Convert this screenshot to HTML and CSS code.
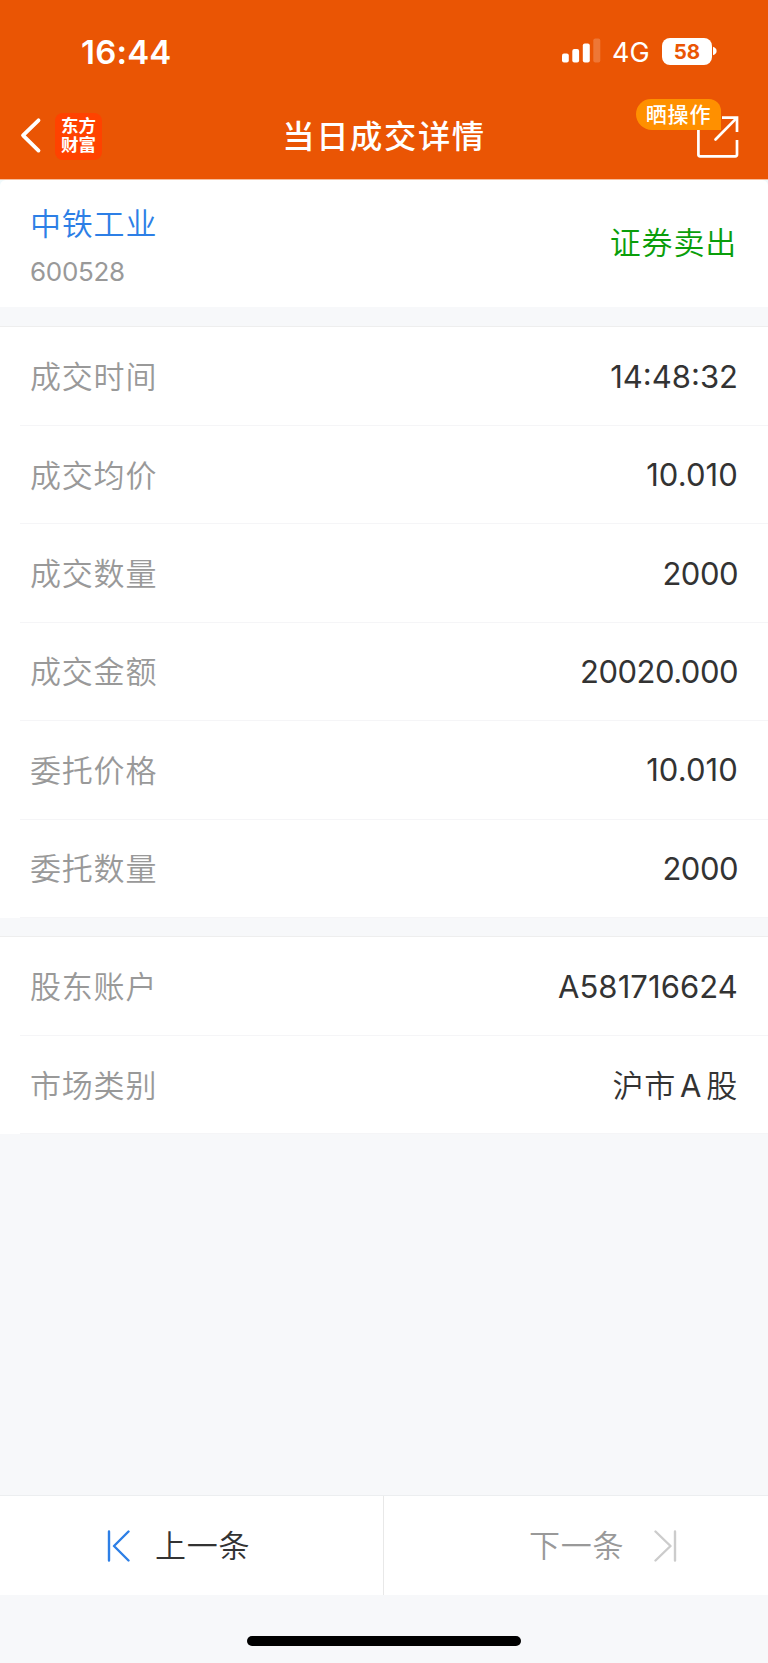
FILE: index.html
```html
<!DOCTYPE html>
<html lang="zh-CN">
<head>
<meta charset="utf-8">
<title>当日成交详情</title>
<link rel="stylesheet" href="styles.css">
</head>
<body>
<div class="app">
  <header class="header">
    <div class="status">
      <span class="clock">16:44</span>
      <div class="indicators">
        <svg class="signal" width="39" height="26" viewBox="0 0 39 26" fill="#fff">
          <rect x="0" y="15.500" width="6.800" height="9" rx="2"/>
          <rect x="10.300" y="11" width="6.800" height="13.500" rx="2"/>
          <rect x="20.800" y="5.500" width="7" height="19" rx="2"/>
          <rect x="31.300" y="0.500" width="7" height="24" rx="2" opacity=".2"/>
        </svg>
        <span class="network">4G</span>
        <span class="battery">58</span>
        <svg class="nub" width="4" height="10" viewBox="0 0 4 10"><path d="M0 .8Q3.600 2 3.600 5T0 9.200Z" fill="#fff"/></svg>
      </div>
    </div>
    <nav class="nav">
      <div class="nav-left">
        <svg width="24" height="40" viewBox="0 0 24 40" fill="none" stroke="#fff" stroke-width="3.800" stroke-linecap="round" stroke-linejoin="round"><path d="M20.500 4.300L5 19.300l15.500 15.300"/></svg>
        <div class="logo"><span>东方</span><span>财富</span></div>
      </div>
      <h1 class="title">当日成交详情</h1>
      <div class="share">
        <svg width="44" height="44" viewBox="0 0 44 44" fill="none" stroke="#fff" stroke-width="2.700">
          <path d="M2.400 10V38.500Q2.400 40.300 4.200 40.300H39.200Q41 40.300 41 38.500V24M26 1.700H41V16"/>
          <path d="M19.500 23.500L40.300 2.400" stroke-linecap="round"/>
        </svg>
        <span class="badge">晒操作</span>
      </div>
    </nav>
  </header>
  <main>
    <div class="summary-wrap">
      <section class="summary">
        <div class="stock"><div class="name">中铁工业</div><div class="code">600528</div></div>
        <div class="side">证券卖出</div>
      </section>
    </div>
    <dl class="group">
      <div class="row"><dt>成交时间</dt><dd>14:48:32</dd></div>
      <div class="row"><dt>成交均价</dt><dd class="price">10.010</dd></div>
      <div class="row"><dt>成交数量</dt><dd class="amount">2000</dd></div>
      <div class="row"><dt>成交金额</dt><dd class="amount">20020.000</dd></div>
      <div class="row"><dt>委托价格</dt><dd class="price">10.010</dd></div>
      <div class="row"><dt>委托数量</dt><dd class="amount">2000</dd></div>
    </dl>
    <dl class="group">
      <div class="row"><dt>股东账户</dt><dd class="account">A581716624</dd></div>
      <div class="row"><dt>市场类别</dt><dd class="market">沪市<span class="latin">A</span>股</dd></div>
    </dl>
  </main>
  <footer class="pager">
    <div class="prev">
      <svg width="24" height="32" viewBox="0 0 24 32" fill="none" stroke="#2d7fe6" stroke-width="2.400" stroke-linecap="round" stroke-linejoin="round"><path d="M2 1.500V30.500M21.500 1.500L7 16L21.500 30.500"/></svg>
      <span>上一条</span>
    </div>
    <div class="next">
      <span>下一条</span>
      <svg width="24" height="32" viewBox="0 0 24 32" fill="none" stroke="#ccc" stroke-width="2.400" stroke-linecap="round" stroke-linejoin="round"><path d="M22 1.500V30.500M2.500 1.500L17.500 16L2.500 30.500"/></svg>
    </div>
  </footer>
  <div class="home"><div class="home-bar"></div></div>
</div>
</body>
</html>
```
FILE: styles.css
```css
* { box-sizing: border-box; }
body, h1, dl, dd { margin: 0; }
body {
  background: #f7f8fa;
  color: #333;
  font-family: Inter, "Noto Sans CJK SC", sans-serif;
  font-size: 31px;
}
.app { display: flex; flex-direction: column; width: 768px; height: 1663px; }
.header {
  height: 180px;
  background: #ea5504;
  border-bottom: 1px solid #f6bd9d;
  color: #fff;
}
.status {
  display: flex;
  justify-content: space-between;
  align-items: center;
  height: 94px;
  padding: 8px 51px 0 81px;
}
.clock { padding-top: 1px; font-size: 33px; font-weight: 600; letter-spacing: .2px; }
.indicators { display: flex; align-items: center; }
.network { margin-left: 11px; padding-top: 2px; width: 50px; font-size: 27px; }
.battery {
  width: 50px;
  height: 27px;
  border-radius: 8px;
  background: #fff;
  color: #ea5504;
  font-size: 20.5px;
  font-weight: 700;
  line-height: 27px;
  text-align: center;
}
.nub { margin-left: 1px; }
.nav {
  display: grid;
  grid-template-columns: 1fr auto 1fr;
  align-items: center;
  height: 85px;
  padding: 0 28px 0 18px;
}
.nav-left { display: flex; align-items: center; gap: 13px; margin-top: -1px; }
.logo {
  display: flex;
  flex-direction: column;
  align-items: center;
  justify-content: center;
  width: 47px;
  height: 47px;
  padding-bottom: 2px;
  border-radius: 8px;
  background: #ff4200;
  font-size: 17.5px;
  font-weight: 700;
  line-height: 19px;
}
.title { padding-left: 10px; font-size: 32.3px; font-weight: 500; letter-spacing: 1.6px; line-height: 40px; }
.share { position: relative; justify-self: end; width: 44px; height: 44px; margin-top: 2px; }
.share svg { display: block; }
.badge {
  position: absolute;
  right: 19px;
  top: -17px;
  width: 85px;
  height: 31px;
  border-radius: 15px 12px 0 16px;
  background: #ff9000;
  font-size: 21px;
  font-weight: 500;
  letter-spacing: .8px;
  line-height: 31px;
  text-align: center;
}
.summary-wrap { background: #f0f9fb; }
.summary {
  display: flex;
  justify-content: space-between;
  align-items: center;
  height: 127px;
  padding: 0 31px 0 30px;
  border-radius: 6px 6px 0 0;
  background: #fff;
}
.name, .side, dt, .market, .pager span { font-weight: 350; letter-spacing: .8px; }
.stock { padding-top: 6px; }
.name { color: #2d7fe6; line-height: 46px; }
.code { margin-top: 5px; color: #999; font-size: 26px; line-height: 40px; letter-spacing: -.3px; }
.side { padding-bottom: 6px; color: #0a9e0a; }
.group { margin-top: 19px; padding-top: .6px; border-top: 1px solid #eee; background: #fff; }
.group + .group { margin-top: 18px; }
.row {
  display: flex;
  justify-content: space-between;
  align-items: center;
  height: 98.4px;
  margin-left: 20px;
  padding: 0 30px 0 10px;
  border-bottom: 1px solid #f5f5f7;
}
dt, .market { padding-bottom: 3px; }
dt { color: #999; }
.price { letter-spacing: .1px; }
.amount { letter-spacing: -.5px; }
.account { letter-spacing: .1px; }
.latin { margin: 0 4px; font-weight: 400; }
.pager {
  display: grid;
  grid-template-columns: 384px 384px;
  height: 100px;
  margin-top: auto;
  border-top: 1px solid #eceef0;
  background: #fff;
}
.pager div { display: flex; align-items: center; }
.pager span { padding-bottom: 4px; }
.prev { padding-left: 107px; gap: 24px; border-right: 1px solid #e8e8e8; }
.next { padding-left: 145px; gap: 29px; color: #999; }
.home { display: flex; justify-content: center; height: 68px; padding-top: 41px; }
.home-bar { width: 274px; height: 10px; border-radius: 5px; background: #000; }
```
